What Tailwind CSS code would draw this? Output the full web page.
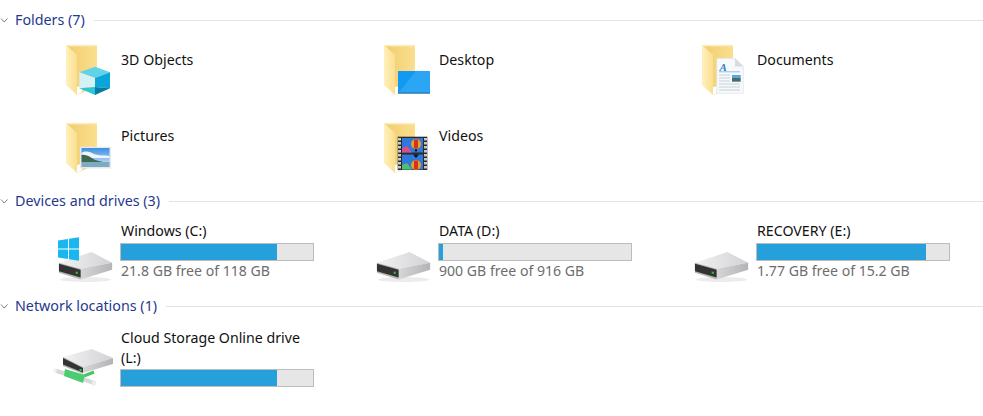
<!DOCTYPE html>
<html lang="en">
<head>
  <meta charset="UTF-8" />
  <title>This PC</title>
  <script src="https://cdn.jsdelivr.net/npm/@tailwindcss/browser@4"></script>
</head>
<body class="bg-white w-[983px] h-[416px] overflow-hidden font-['Noto_Sans',sans-serif] text-[14.2px] leading-[20px] text-[#111]">

<!-- Shared icon parts -->
<svg width="0" height="0" class="absolute">
  <defs>
    <linearGradient id="folderBack" x1="0" y1="0" x2="1" y2="0"><stop offset="0" stop-color="#f0cd6e"/><stop offset="1" stop-color="#fbdf8e"/></linearGradient>
    <linearGradient id="folderFront" x1="0" y1="0" x2="1" y2="0"><stop offset="0" stop-color="#fff0bd"/><stop offset="1" stop-color="#fbdf8f"/></linearGradient>
    <linearGradient id="driveTop" x1="0" y1="0" x2="1" y2="0"><stop offset="0" stop-color="#f2f2f3"/><stop offset="1" stop-color="#d2d2d5"/></linearGradient>
    <linearGradient id="driveSide" x1="0" y1="0" x2="1" y2="0"><stop offset="0" stop-color="#d6d6d8"/><stop offset="1" stop-color="#b4b4b8"/></linearGradient>
    <linearGradient id="sky" x1="0" y1="0" x2="0" y2="1"><stop offset="0" stop-color="#3d8fe2"/><stop offset="1" stop-color="#d6e9f5"/></linearGradient>

    <symbol id="folder" viewBox="0 0 65 56">
      <path d="M10 1H41V42L21 51Z" fill="url(#folderBack)"/>
      <path d="M10 1H41V2.5H10Z" fill="#fdeab0"/>
      <path d="M10 1L21 11V51L10 41Z" fill="url(#folderFront)"/>
      <path d="M21 43L26 42V48L21 51Z" fill="#fff"/>
    </symbol>

    <symbol id="drive" viewBox="6 -9 65 64">
      <ellipse cx="36" cy="50" rx="26" ry="2.5" fill="#ececec"/>
      <path d="M9 33L42 22L63 33L31 39Z" fill="url(#driveTop)"/>
      <path d="M31 39L63 33V40L31 50Z" fill="url(#driveSide)"/>
      <path d="M9 33L31 39V50L9 43Z" fill="#b5b5b5"/>
      <path d="M9 34L31 40V48L9 41.5Z" fill="#333"/>
      <rect x="26" y="42" width="2.2" height="2.2" fill="#22c03c"/>
    </symbol>
  </defs>
</svg>

<main class="pt-[10px]">

  <!-- Folders -->
  <section>
    <h2 class="flex items-center h-[20px] font-normal text-[14.3px] text-[#1f3a8e]">
      <svg width="15" height="20" viewBox="0 0 15 20" class="shrink-0"><path d="M1 8.5L4.2 12L7.5 8.5" fill="none" stroke="#808080" stroke-width="1"/></svg>
      <span>Folders (7)</span>
      <span class="flex-1 h-px bg-[#e3e3e3] ml-[9px]"></span>
    </h2>

    <div class="grid grid-cols-[318px_318px_318px] gap-y-[24px] mt-[14px] ml-[56px]">
      <div class="flex h-[52px]">
        <svg width="65" height="56" viewBox="0 0 65 56" class="shrink-0">
          <use href="#folder"/>
          <path d="M39 22.7L54 28.3L39 34L23.3 28.3Z" fill="#62d2e6"/>
          <path d="M23.3 28.3L39 34V43L23.3 44.3Z" fill="#d4f2f5"/>
          <path d="M54 28.3V44.3L39 43V34Z" fill="#0aa6d9"/>
          <path d="M23.3 44.3L39 43V51Z" fill="#2fc5d9"/>
          <path d="M54 44.3L39 43V51Z" fill="#067c9f"/>
        </svg>
        <span class="mt-[6px]">3D Objects</span>
      </div>
      <div class="flex h-[52px]">
        <svg width="65" height="56" viewBox="0 0 65 56" class="shrink-0">
          <use href="#folder"/>
          <rect x="24" y="27" width="32" height="22.5" fill="#1398f3"/>
          <path d="M24 49.5L42 27H56V49.5Z" fill="#2aa6f5"/>
          <rect x="24" y="48" width="32" height="1.5" fill="#3d85b5"/>
        </svg>
        <span class="mt-[6px]">Desktop</span>
      </div>
      <div class="flex h-[52px]">
        <svg width="65" height="56" viewBox="0 0 65 56" class="shrink-0">
          <use href="#folder"/>
          <path d="M24.7 14.3H43L51.3 22.5V49.3H24.7Z" fill="#f7f9fb" stroke="#d8dde2" stroke-width="0.6"/>
          <path d="M43 14.3L51.3 22.5H43Z" fill="#d5dbe1"/>
          <text x="27.5" y="27" font-family="Liberation Serif" font-style="italic" font-weight="700" font-size="11" fill="#2f7fd0">A</text>
          <path d="M27 31H38M27 34H38M27 37H38M27 40H48M27 43H48M27 46H48" stroke="#c5d0da" stroke-width="1"/>
          <path d="M27 27.8H48" stroke="#8cc4ec" stroke-width="1"/>
          <rect x="40" y="31" width="8.7" height="3" fill="#58a7e0"/>
          <rect x="40" y="34" width="8.7" height="3.7" fill="#476f6a"/>
        </svg>
        <span class="mt-[6px]">Documents</span>
      </div>
      <div class="flex h-[52px]">
        <svg width="65" height="56" viewBox="0 0 65 56" class="shrink-0 mt-[2px]">
          <use href="#folder"/>
          <rect x="24" y="24.7" width="31" height="21.8" fill="#e4e9ed"/>
          <rect x="25.5" y="26" width="28" height="19" fill="url(#sky)"/>
          <path d="M25.5 31C30 28 34 30 38 32C43 34 48 33 53.5 34V36H25.5Z" fill="#eef6fb"/>
          <path d="M25.5 33C30 32 34 35 39 38L47 40H25.5Z" fill="#3c6b4f"/>
          <rect x="25.5" y="40" width="28" height="5" fill="#7fabc0"/>
        </svg>
        <span class="mt-[6px]">Pictures</span>
      </div>
      <div class="flex h-[52px]">
        <svg width="65" height="56" viewBox="0 0 65 56" class="shrink-0 mt-[2px]">
          <use href="#folder"/>
          <rect x="23.7" y="14.7" width="29.6" height="33.3" fill="#2a2a2a"/>
          <path d="M25.5 16V47" stroke="#c9c9c9" stroke-width="3" stroke-dasharray="2.5 1.5"/>
          <path d="M51.5 16V47" stroke="#c9c9c9" stroke-width="3" stroke-dasharray="2.5 1.5"/>
          <rect x="28" y="16" width="21" height="14.5" fill="#2f78dc"/>
          <rect x="28" y="32.5" width="21" height="15" fill="#2f78dc"/>
          <path d="M28 30.5V26L33 24L38 30.5Z" fill="#d84f8f"/>
          <path d="M28 47.5V43L33 41L38 47.5Z" fill="#4fbf6a"/>
          <circle cx="42" cy="22" r="5" fill="#e8a21f"/>
          <path d="M40 17.5H44V26.5H40Z" fill="#d4302a"/>
          <rect x="41" y="27" width="2" height="2.5" fill="#231a10"/>
          <circle cx="42" cy="43" r="5" fill="#e8a21f"/>
          <path d="M40 38.5H44V47.5H40Z" fill="#d4302a"/>
          <path d="M39 32.5H45L42 36Z" fill="#111"/>
        </svg>
        <span class="mt-[6px]">Videos</span>
      </div>
    </div>
  </section>

  <!-- Devices and drives -->
  <section class="mt-[19px]">
    <h2 class="flex items-center h-[20px] font-normal text-[14.3px] text-[#1f3a8e]">
      <svg width="15" height="20" viewBox="0 0 15 20" class="shrink-0"><path d="M1 8.5L4.2 12L7.5 8.5" fill="none" stroke="#808080" stroke-width="1"/></svg>
      <span>Devices and drives (3)</span>
      <span class="flex-1 h-px bg-[#e3e3e3] ml-[9px]"></span>
    </h2>

    <div class="grid grid-cols-[318px_318px_318px] mt-[10px] ml-[56px]">
      <div class="flex h-[60px]">
        <svg width="64" height="64" viewBox="0 0 64 64" class="shrink-0 mr-px">
          <use href="#drive" width="64" height="64"/>
          <path d="M2 19.5L12 18V27.5H2ZM13 17.8L23 16.3V27.5H13ZM2 28.5H12V38L2 36.5ZM13 28.5H23V39.7L13 38.2Z" fill="#18b7f0"/>
        </svg>
        <div class="w-[194px]">
          <div>Windows (C:)</div>
          <div class="w-[194px] h-[18px] mt-[2px] -ml-px bg-[#e6e6e6] border border-[#bcbcbc]"><div class="h-full bg-[#26a0da]" style="width: 81%"></div></div>
          <div class="text-[14.1px] text-[#6d6d6d]">21.8 GB free of 118 GB</div>
        </div>
      </div>
      <div class="flex h-[60px]">
        <svg width="64" height="64" viewBox="0 0 64 64" class="shrink-0 mr-px"><use href="#drive" width="64" height="64"/></svg>
        <div class="w-[194px]">
          <div>DATA (D:)</div>
          <div class="w-[194px] h-[18px] mt-[2px] -ml-px bg-[#e6e6e6] border border-[#bcbcbc]"><div class="h-full bg-[#26a0da]" style="width: 2%"></div></div>
          <div class="text-[14.1px] text-[#6d6d6d]">900 GB free of 916 GB</div>
        </div>
      </div>
      <div class="flex h-[60px]">
        <svg width="64" height="64" viewBox="0 0 64 64" class="shrink-0 mr-px"><use href="#drive" width="64" height="64"/></svg>
        <div class="w-[194px]">
          <div>RECOVERY (E:)</div>
          <div class="w-[194px] h-[18px] mt-[2px] -ml-px bg-[#e6e6e6] border border-[#bcbcbc]"><div class="h-full bg-[#26a0da]" style="width: 88%"></div></div>
          <div class="text-[14.1px] text-[#6d6d6d]">1.77 GB free of 15.2 GB</div>
        </div>
      </div>
    </div>
  </section>

  <!-- Network locations -->
  <section class="mt-[15px]">
    <h2 class="flex items-center h-[20px] font-normal text-[14.3px] text-[#1f3a8e]">
      <svg width="15" height="20" viewBox="0 0 15 20" class="shrink-0"><path d="M1 8.5L4.2 12L7.5 8.5" fill="none" stroke="#808080" stroke-width="1"/></svg>
      <span>Network locations (1)</span>
      <span class="flex-1 h-px bg-[#e3e3e3] ml-[9px]"></span>
    </h2>

    <div class="flex mt-[12px] ml-[56px]">
      <svg width="64" height="64" viewBox="0 0 64 64" class="shrink-0 mr-px overflow-visible">
        <path d="M7 29L36 21L57 30L27 39Z" fill="url(#driveTop)"/>
        <path d="M27 39L57 30V36L27 45Z" fill="url(#driveSide)"/>
        <path d="M7 29L27 39V46L7 38Z" fill="#b5b5b5"/>
        <path d="M7 30L27 40V44.5L7 36.5Z" fill="#333"/>
        <rect x="23.5" y="41" width="2.2" height="2.2" fill="#22c03c"/>
        <path d="M28 48L38 44" stroke="#45c66a" stroke-width="3"/>
        <path d="M-1 42.5L10 46" stroke="#d5d9d5" stroke-width="4"/>
        <ellipse cx="-1" cy="42.5" rx="1.8" ry="2.5" fill="#f2f2f2"/>
        <path d="M27 51L38 55" stroke="#d5d9d5" stroke-width="4"/>
        <ellipse cx="38" cy="55" rx="2.2" ry="2.8" fill="#ececec"/>
        <path d="M9 41L29 47L27 55L8 48Z" fill="#4ccb72"/>
      </svg>
      <div class="w-[194px]">
        <div>Cloud Storage Online drive (L:)</div>
        <div class="w-[194px] h-[18px] mt-px -ml-px bg-[#e6e6e6] border border-[#bcbcbc]"><div class="h-full bg-[#26a0da]" style="width: 81%"></div></div>
      </div>
    </div>
  </section>

</main>
</body>
</html>
